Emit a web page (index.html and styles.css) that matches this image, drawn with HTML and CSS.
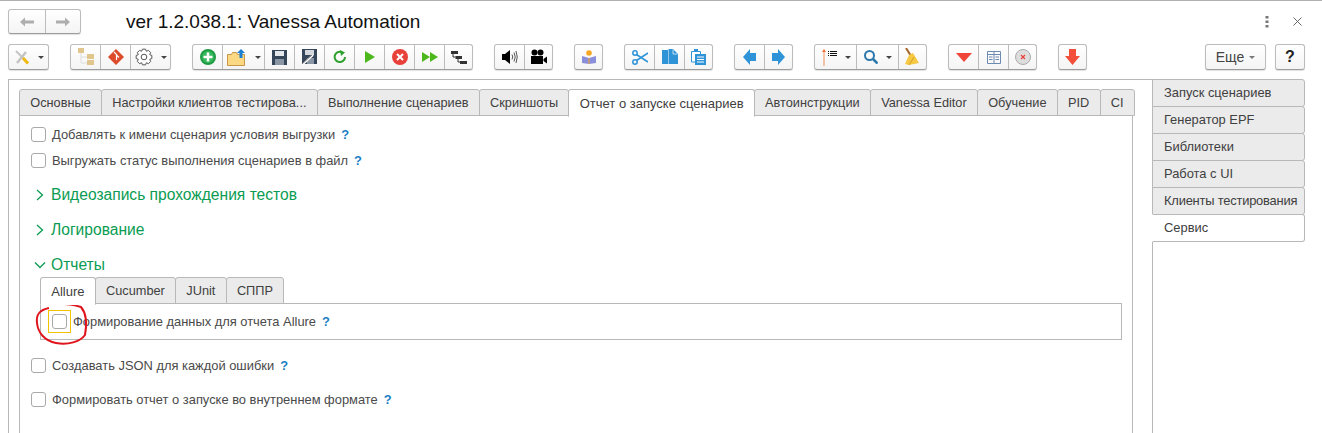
FILE: index.html
```html
<!DOCTYPE html>
<html>
<head>
  <meta charset="utf-8">
  <title>Vanessa Automation</title>
  <link rel="stylesheet" href="styles.css">
</head>
<body>
  <div class="titlebar">
    <div class="group nav">
      <button class="tb nav-btn">
        <svg width="16" height="12" viewBox="0 0 16 12"><path d="M1 6 6 1.500V4.500H15V7.500H6V10.500Z" fill="#aeaeae"/></svg>
      </button>
      <button class="tb nav-btn">
        <svg width="16" height="12" viewBox="0 0 16 12"><path d="M15 6 10 1.500V4.500H1V7.500H10V10.500Z" fill="#aeaeae"/></svg>
      </button>
    </div>
    <h1 class="title">ver 1.2.038.1: Vanessa Automation</h1>
    <div class="win-icons">
      <svg width="4" height="12" viewBox="0 0 4 12"><path d="M.5 0h3v2.500h-3zM.5 4.500h3V7h-3zM.5 9h3v2.500h-3z" fill="#777"/></svg>
      <svg width="9" height="9" viewBox="0 0 9 9"><path d="M.5.5l8 8M8.500.5l-8 8" stroke="#666" fill="none"/></svg>
    </div>
  </div>

  <div class="toolbar">
    <div class="group">
      <button class="tb wide">
        <svg width="16" height="16" viewBox="0 0 16 16"><path d="M2 2 14 14" stroke="#c4c4c4" stroke-width="2"/><path d="M3 14 12 3" stroke="#c4c4c4" stroke-width="2.500"/><path d="M9 9 14 14.500" stroke="#f2b90f" stroke-width="3"/></svg>
        <i class="caret"></i>
      </button>
    </div>

    <div class="group">
      <button class="tb">
        <svg width="16" height="18" viewBox="0 0 16 18"><path d="M3 3V15H10M3 9H10" stroke="#ddd" fill="none"/><path d="M0 0h6v5H0zM9 6h7v5H9zM9 12h7v5H9z" fill="#e0c68c"/></svg>
      </button>
      <button class="tb">
        <svg width="16" height="16" viewBox="0 0 16 16"><path d="M8 0 16 8 8 16 0 8Z" fill="#dd4b2c"/><path d="M6 3 8.500 5.500V11M8.500 6 11 8.500" stroke="#fff" stroke-width="1.200" fill="none"/></svg>
      </button>
      <button class="tb wide">
        <svg width="18" height="18" viewBox="0 0 18 18"><polygon transform="translate(9 9)" points="5.75,-2.32 7.85,-1.53 7.85,1.53 5.75,2.32 6.63,4.47 4.47,6.63 2.32,5.75 1.53,7.85 -1.53,7.85 -2.32,5.75 -4.47,6.63 -6.63,4.47 -5.75,2.32 -7.85,1.53 -7.85,-1.53 -5.75,-2.32 -6.63,-4.47 -4.47,-6.63 -2.32,-5.75 -1.53,-7.85 1.53,-7.85 2.32,-5.75 4.47,-6.63 6.63,-4.47" fill="#fff" stroke="#555"/><circle cx="9" cy="9" r="2.800" fill="none" stroke="#555"/></svg>
        <i class="caret"></i>
      </button>
    </div>

    <div class="group">
      <button class="tb">
        <svg width="16" height="16" viewBox="0 0 16 16"><circle cx="8" cy="8" r="8" fill="#1f9b45"/><circle cx="8" cy="8" r="6" fill="#36b85c"/><path d="M8 3.500v9M3.500 8h9" stroke="#fff" stroke-width="2.500"/></svg>
      </button>
      <button class="tb wide">
        <svg width="20" height="17" viewBox="0 0 20 17"><path d="M.5 5.500h4l1-2h4l1 2h7v11H.5Z" fill="#fbd884" stroke="#c9964a"/><path d="M14 0l4 4h-2.500v5h-3V4H10Z" fill="#1c7fd1"/></svg>
        <i class="caret"></i>
      </button>
      <button class="tb">
        <svg width="15" height="15" viewBox="0 0 15 15"><path d="M0 0H15V15H0Z" fill="#36465a"/><path d="M3 1H12V6H3Z" fill="#e4e8ec"/><path d="M3 9H12V15H3Z" fill="#8a96a3"/></svg>
      </button>
      <button class="tb">
        <svg width="15" height="16" viewBox="0 0 15 16"><path d="M0 0H15V15H0Z" fill="#36465a"/><path d="M3 1H12V6H3Z" fill="#d4d8dc"/><path d="M5 9H12V15H5Z" fill="#8a96a3"/><path d="M0 16 11 6" stroke="#fff" stroke-width="2"/><path d="M0 15 10 6" stroke="#777"/></svg>
      </button>
      <button class="tb">
        <svg width="14" height="14" viewBox="0 0 14 14"><path d="M12 7A5.200 5.200 0 1 1 8.500 2" fill="none" stroke="#2ca02c" stroke-width="2"/><path d="M7 0 12 2.500 8 6Z" fill="#2ca02c"/></svg>
      </button>
      <button class="tb">
        <svg width="10" height="12" viewBox="0 0 10 12"><path d="M0 0 10 6 0 12Z" fill="#4cb81c"/></svg>
      </button>
      <button class="tb">
        <svg width="16" height="16" viewBox="0 0 16 16"><circle cx="8" cy="8" r="8" fill="#e8413a"/><path d="M5 5l6 6M11 5l-6 6" stroke="#fff" stroke-width="2"/></svg>
      </button>
      <button class="tb">
        <svg width="16" height="10" viewBox="0 0 16 10"><path d="M0 0 8 5 0 10ZM8 0 16 5 8 10Z" fill="#4cb81c"/></svg>
      </button>
      <button class="tb">
        <svg width="16" height="13" viewBox="0 0 16 13"><path d="M0 0H7V3H0ZM4.500 5H11V8H4.500ZM9 10H16V13H9Z" fill="#333"/><path d="M2 3V6H4.500M7 8V11H9" stroke="#333" fill="none"/></svg>
      </button>
    </div>

    <div class="group">
      <button class="tb">
        <svg width="16" height="18" viewBox="0 0 16 18"><path d="M0 6H3L8 2V16L3 12H0Z" fill="#000"/><path d="M10 6.500Q11.500 9 10 11.500M12 4.500Q14.500 9 12 13.500M14 3Q16.500 9 14 15" fill="none" stroke="#555"/></svg>
      </button>
      <button class="tb">
        <svg width="16" height="16" viewBox="0 0 16 16"><circle cx="3.500" cy="3.500" r="3" fill="#000"/><circle cx="9.500" cy="3.500" r="3" fill="#000"/><path d="M0 7H12V15H0ZM12.500 10 16 7.500V14.500L12.500 12Z" fill="#000"/></svg>
      </button>
    </div>

    <div class="group">
      <button class="tb">
        <svg width="14" height="14" viewBox="0 0 14 14"><circle cx="7" cy="3" r="2.800" fill="#f5a623"/><path d="M0 6 7 8 14 6V13L7 14 0 13Z" fill="#8a8fdc"/><path d="M7 8V14" stroke="#f5a623"/></svg>
      </button>
    </div>

    <div class="group">
      <button class="tb">
        <svg width="16" height="15" viewBox="0 0 16 15"><circle cx="3" cy="3" r="2.200" fill="none" stroke="#2f93d8" stroke-width="1.500"/><circle cx="3" cy="12" r="2.200" fill="none" stroke="#2f93d8" stroke-width="1.500"/><path d="M4.500 4.500 16 12M4.500 10.500 16 3" stroke="#2f93d8" stroke-width="1.500"/></svg>
      </button>
      <button class="tb">
        <svg width="16" height="16" viewBox="0 0 16 16"><path d="M0 1H6V15H0Z" fill="#2f93d8"/><path d="M6.500 0H11L16 5V15H6.500Z" fill="#2f93d8"/><path d="M11 .5V5H15.500" fill="none" stroke="#fff" stroke-width=".7"/></svg>
      </button>
      <button class="tb">
        <svg width="15" height="16" viewBox="0 0 15 16"><path d="M.5 2.500H9.500V13H.5Z" fill="#fff" stroke="#2f93d8"/><path d="M3 0H7V3H3Z" fill="#2f93d8"/><path d="M4 5H15V16H4Z" fill="#2f93d8"/><path d="M6 8H13M6 10.500H13M6 13H13" stroke="#fff"/></svg>
      </button>
    </div>

    <div class="group">
      <button class="tb">
        <svg width="13" height="16" viewBox="0 0 13 16"><path d="M0 8 7 0V4H13V12H7V16Z" fill="#2f93d8"/></svg>
      </button>
      <button class="tb">
        <svg width="13" height="16" viewBox="0 0 13 16"><path d="M13 8 6 0V4H0V12H6V16Z" fill="#2f93d8"/></svg>
      </button>
    </div>

    <div class="group">
      <button class="tb wide">
        <svg width="16" height="17" viewBox="0 0 16 17"><path d="M3 17V1" stroke="#ef8f5a"/><path d="M1 3 3 0 5 3Z" fill="#ef6f3a"/><path d="M7 2h1v1H7zM9 2h7v1H9zM7 4h1v1H7zM9 4h7v1H9zM7 6h1v1H7zM9 6h7v1H9z" fill="#111"/></svg>
        <i class="caret"></i>
      </button>
      <button class="tb wide">
        <svg width="14" height="14" viewBox="0 0 14 14"><circle cx="5.500" cy="5.500" r="4.500" fill="none" stroke="#2b78ac" stroke-width="2"/><path d="M9 9l4.500 4.500" stroke="#2b78ac" stroke-width="2.500"/></svg>
        <i class="caret"></i>
      </button>
      <button class="tb">
        <svg width="15" height="18" viewBox="0 0 15 18"><path d="M1 0 6 8" stroke="#a5682a" stroke-width="2"/><path d="M4 7 8 5 14 15 4 17 0 16Z" fill="#f6c944"/><path d="M4 17 9 9" stroke="#d69e21"/></svg>
      </button>
    </div>

    <div class="group">
      <button class="tb">
        <svg width="16" height="9" viewBox="0 0 16 9"><path d="M0 0H16L8 9Z" fill="#f2453a"/></svg>
      </button>
      <button class="tb">
        <svg width="14" height="13" viewBox="0 0 14 13"><path d="M.5.500H13.500V12.500H.5ZM7 .5V12.500M.5 3.500H13.500M2 6H5.500M8.500 6H12M2 8.500H5.500M8.500 8.500H12" fill="none" stroke="#6d8bb0"/></svg>
      </button>
      <button class="tb">
        <svg width="16" height="16" viewBox="0 0 16 16"><circle cx="8" cy="8" r="7.500" fill="#ddd" stroke="#aaa"/><path d="M6 6l4 4M10 6l-4 4" stroke="#e8413a" stroke-width="1.200"/></svg>
      </button>
    </div>

    <div class="group">
      <button class="tb">
        <svg width="15" height="16" viewBox="0 0 15 16"><path d="M4 0H11V7H15L7.500 16 0 7H4Z" fill="#f2503a"/></svg>
      </button>
    </div>

    <div class="group more">
      <button class="tb more-btn">Еще <i class="caret small"></i></button>
    </div>
    <div class="group">
      <button class="tb help-btn">?</button>
    </div>
  </div>

  <div class="workspace">
    <div class="main-panel">
      <div class="tabs">
        <div class="tab">Основные</div>
        <div class="tab">Настройки клиентов тестирова...</div>
        <div class="tab">Выполнение сценариев</div>
        <div class="tab">Скриншоты</div>
        <div class="tab active">Отчет о запуске сценариев</div>
        <div class="tab">Автоинструкции</div>
        <div class="tab">Vanessa Editor</div>
        <div class="tab">Обучение</div>
        <div class="tab">PID</div>
        <div class="tab">CI</div>
      </div>
      <div class="tab-page">
        <label class="check first"><span class="box"></span>Добавлять к имени сценария условия выгрузки<span class="hint">?</span></label>
        <label class="check second"><span class="box"></span>Выгружать статус выполнения сценариев в файл<span class="hint">?</span></label>

        <div class="section">
          <svg width="8" height="12" viewBox="0 0 8 12"><path d="M1 1 6.500 6 1 11" fill="none" stroke="#0a9c52" stroke-width="1.300"/></svg>
          Видеозапись прохождения тестов
        </div>
        <div class="section">
          <svg width="8" height="12" viewBox="0 0 8 12"><path d="M1 1 6.500 6 1 11" fill="none" stroke="#0a9c52" stroke-width="1.300"/></svg>
          Логирование
        </div>
        <div class="section">
          <svg width="12" height="8" viewBox="0 0 12 8"><path d="M1 1.500 6 6.500 11 1.500" fill="none" stroke="#0a9c52" stroke-width="1.300"/></svg>
          Отчеты
        </div>

        <div class="tabs sub-tabs">
          <div class="tab active">Allure</div>
          <div class="tab">Cucumber</div>
          <div class="tab">JUnit</div>
          <div class="tab">СППР</div>
        </div>
        <div class="sub-page">
          <label class="check"><span class="box focused"></span>Формирование данных для отчета Allure<span class="hint">?</span></label>
          <svg class="scribble" width="65" height="50" viewBox="0 0 65 50"><path d="M20 5C33 4 45 6 51 8C56 14 57 25 55 36C50 43 38 46 26 44C15 42 8 34 7 24C6 16 9 11 19 9" fill="none" stroke="#e0141c" stroke-width="2"/></svg>
        </div>

        <label class="check after-sub"><span class="box"></span>Создавать JSON для каждой ошибки<span class="hint">?</span></label>
        <label class="check last"><span class="box"></span>Формировать отчет о запуске во внутреннем формате<span class="hint">?</span></label>
      </div>
    </div>

    <div class="side-tabs">
      <div class="side-tab">Запуск сценариев</div>
      <div class="side-tab">Генератор EPF</div>
      <div class="side-tab">Библиотеки</div>
      <div class="side-tab">Работа с UI</div>
      <div class="side-tab tight">Клиенты тестирования</div>
      <div class="side-tab active">Сервис</div>
    </div>
  </div>
</body>
</html>
```

FILE: styles.css
```css
* {
  box-sizing: border-box;
}
html, body {
  height: 100%;
}
body {
  margin: 0;
  display: flex;
  flex-direction: column;
  overflow: hidden;
  background: white;
  color: #4a4a4a;
  font-family: "Liberation Sans", Arial, sans-serif;
  font-size: 12.9px;
  border-top: 1px solid #b0b0b0;
}

/* title row */
.titlebar {
  display: flex;
  align-items: center;
  height: 43px;
  padding: 8px 20px 10px 8px;
  flex: none;
}
.title {
  margin: 0 0 0 45px;
  font-size: 19px;
  font-weight: normal;
  color: #111;
  flex: 1;
}
.win-icons {
  display: flex;
  align-items: center;
  gap: 24px;
}

/* toolbar */
.toolbar {
  display: flex;
  gap: 21px;
  height: 26px;
  padding: 0 17px 0 8px;
  flex: none;
}
.group {
  display: flex;
  border: 1px solid #bcbcbc;
  border-bottom-color: #9c9c9c;
  border-radius: 3px;
  box-shadow: 0 1px 1px rgba(0,0,0,0.12);
  background: linear-gradient(#ffffff, #f4f4f4);
}
.nav {
  height: 25px;
}
.more {
  margin-left: auto;
  margin-right: -12px;
}
.tb {
  --w: 30px;
  width: var(--w);
  display: flex;
  align-items: center;
  justify-content: center;
  gap: 8px;
  padding: 0;
  border: none;
  border-left: 1px solid #bcbcbc;
  background: none;
  font-family: inherit;
}
.tb:first-child {
  width: calc(var(--w) - 1px);
  border-left: none;
}
.tb:last-child {
  width: calc(var(--w) - 2px);
}
.tb:only-child {
  width: calc(var(--w) - 3px);
}
.wide {
  --w: 42px;
}
.nav-btn {
  --w: 37px;
}
.caret {
  width: 0;
  height: 0;
  border: 3.5px solid transparent;
  border-top: 3.5px solid #444;
  border-bottom: none;
}
.caret.small {
  border-top-color: #777;
  margin-left: 5px;
}
.more-btn {
  --w: 62px;
  gap: 0;
  font-size: 14px;
  color: #444;
}
.help-btn {
  --w: 31px;
  font-size: 16px;
  font-weight: bold;
  color: #222;
}

/* main area */
.workspace {
  display: flex;
  flex: 1;
  margin-top: 9px;
  padding: 0 17px 0 8px;
  min-height: 0;
}
.main-panel {
  flex: none;
  width: 1145px;
  padding: 9px 19px 0 10px;
  border: 1px solid #b8b8b8;
  border-bottom: none;
  display: flex;
  flex-direction: column;
}
.tabs {
  display: flex;
  flex: none;
  height: 27px;
}
.tab {
  display: flex;
  align-items: center;
  padding: 0 10.25px;
  margin-left: -1px;
  background: #ebebeb;
  border: 1px solid #b8b8b8;
  border-radius: 3px 3px 0 0;
  color: #404040;
  font-size: 12.75px;
  white-space: nowrap;
}
.tab:first-child {
  margin-left: 0;
}
.tab.active {
  background: white;
  border-bottom-color: white;
  position: relative;
  z-index: 1;
  height: 28px;
  font-size: 13px;
}
.tab-page {
  flex: 1;
  margin-top: -1px;
  border: 1px solid #b8b8b8;
  border-bottom: none;
}

/* checkboxes */
.check {
  display: flex;
  align-items: center;
  height: 20px;
  margin-left: 11px;
}
.check.first {
  margin-top: 8px;
}
.check.second {
  margin-top: 6px;
}
.box {
  width: 15px;
  height: 15px;
  margin-right: 6px;
  border: 1px solid #a9a9a9;
  border-radius: 3px;
  background: white;
}
.box.focused {
  position: relative;
}
.box.focused::after {
  content: "";
  position: absolute;
  inset: -5px;
  border: 1px solid #f2c200;
}
.hint {
  margin-left: 6px;
  color: #1c7fc4;
  font-weight: bold;
}

/* collapsible groups */
.section {
  display: flex;
  align-items: center;
  height: 20px;
  margin: 15px 0 0 14px;
  color: #0a9c52;
  font-size: 15.6px;
}
.section svg {
  flex: none;
  width: 12px;
  margin-right: 5px;
}
.sub-tabs {
  margin: 2px 0 0 20px;
}
.sub-page {
  position: relative;
  height: 37px;
  margin: -1px 10px 0 20px;
  padding-top: 7px;
  border: 1px solid #b8b8b8;
}
.sub-page .check {
  margin-left: 11px;
}
.scribble {
  position: absolute;
  left: -11px;
  top: -5px;
}
.check.after-sub {
  margin-top: 15px;
}
.check.last {
  margin-top: 14px;
}

/* right tabs */
.side-tabs {
  width: 152px;
  flex: none;
}
.side-tab {
  display: flex;
  align-items: center;
  height: 28px;
  margin-top: -1px;
  margin-left: -1px;
  padding: 0 0 1px 11px;
  background: #ebebeb;
  border: 1px solid #b8b8b8;
  border-radius: 0 3px 3px 0;
  color: #404040;
  white-space: nowrap;
}
.side-tab:first-child {
  margin-top: 0;
}
.side-tab.tight {
  letter-spacing: -0.2px;
}
.side-tab.active {
  background: white;
  border-left-color: white;
  position: relative;
}
```
